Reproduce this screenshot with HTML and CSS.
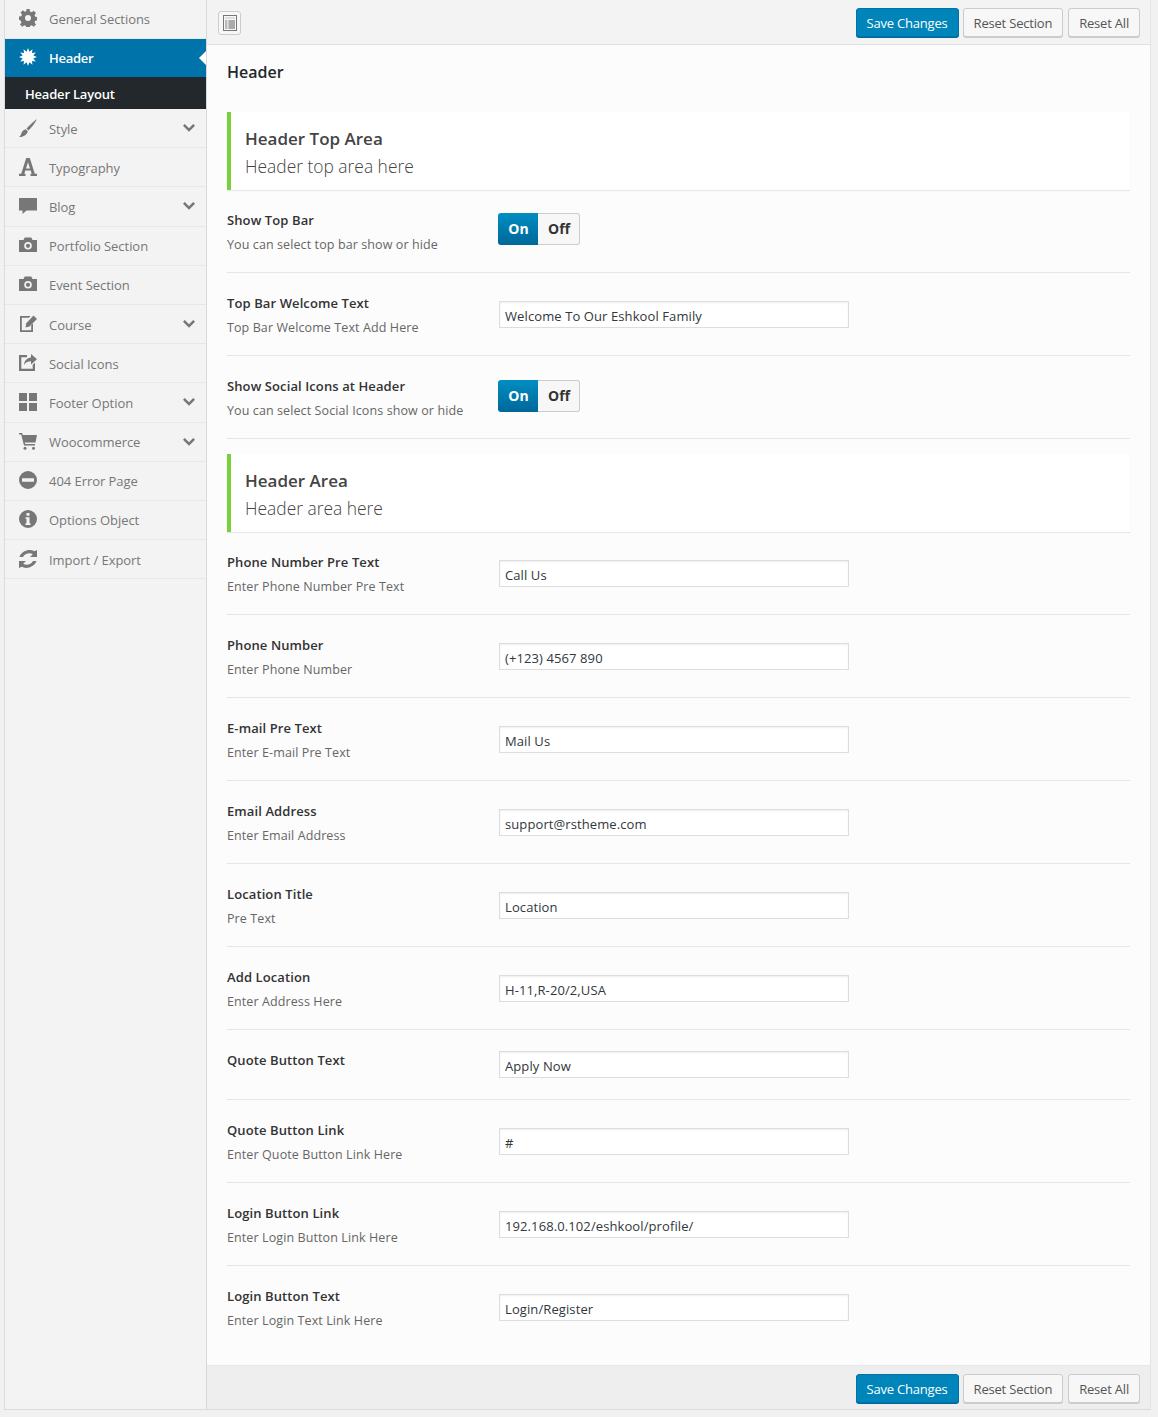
FILE: index.html
```html
<!DOCTYPE html>
<html lang="en">

<head>
  <meta charset="UTF-8" />
  <meta name="viewport" content="width=device-width, initial-scale=1.0" />
  <title>Theme Options</title>
  <link rel="stylesheet" href="styles.css">
</head>

<body>

  <svg class="sprite" width="0" height="0">
    <symbol id="i-gear" viewBox="0 0 18 18">
      <path d="M7.400 0h3.200l.4 2.500 1.700.7 2-1.500 2.300 2.300-1.500 2 .7 1.700 2.300.4v3.200l-2.300.4-.7 1.700 1.500 2-2.300 2.300-2-1.500-1.700.7-.4 2.300H7.400l-.4-2.300-1.700-.7-2 1.500-2.300-2.300 1.500-2-.7-1.700L0 10.800V7.600l2.300-.4.7-1.700-1.500-2 2.300-2.300 2 1.500 1.700-.7zM9 6a3 3 0 1 0 0 6 3 3 0 0 0 0-6z" fill-rule="evenodd" />
    </symbol>
    <symbol id="i-burst" viewBox="0 0 18 18">
      <polygon points="18,9 14.300,10.400 16.800,13.500 12.900,12.900 13.500,16.800 10.400,14.300 9,18 7.600,14.300 4.500,16.800 5.100,12.900 1.200,13.500 3.700,10.400 0,9 3.700,7.600 1.200,4.500 5.100,5.100 4.500,1.200 7.600,3.700 9,0 10.400,3.700 13.500,1.200 12.900,5.100 16.800,4.500 14.300,7.600" />
    </symbol>
    <symbol id="i-brush" viewBox="0 0 18 18">
      <path d="M18 0c-2 4-5 8-8.500 11.500l-2-2C10.500 6 14.500 2.500 18 0z" />
      <path d="M6.800 10.300l2 2C8.300 15.500 4 18.500 0 18c1.500-1 2-2.500 2.500-4 .6-1.800 2.500-3.500 4.300-3.700z" />
    </symbol>
    <symbol id="i-type" viewBox="0 0 18 18">
      <path d="M7.200 0h3.600l5 15.800H18V18h-6.500v-2.200h1.200l-1-3.200H6.300l-1 3.200h1.200V18H0v-2.200h2.200zM9 4.200l-2 6.200h4z" fill-rule="evenodd" />
    </symbol>
    <symbol id="i-chat" viewBox="0 0 18 18">
      <path d="M0 1h18v12.500H7.500L3.500 17v-3.500H0z" />
    </symbol>
    <symbol id="i-camera" viewBox="0 0 18 18">
      <path d="M0 4h4.500l1.200-2.500h6.600L13.500 4H18v12H0zM9 6a3.800 3.800 0 1 0 0 7.600A3.800 3.800 0 0 0 9 6zm0 1.700a2.100 2.100 0 1 1 0 4.200 2.100 2.100 0 0 1 0-4.200z" fill-rule="evenodd" />
    </symbol>
    <symbol id="i-edit" viewBox="0 0 18 18">
      <path d="M1 1h10.500L10 2.800H2.800v12.400h9.400v-5l1.800-2V17H1z" />
      <path d="M14.500.5L18 4l-7.500 7.500-4 1 .8-4.300z" />
    </symbol>
    <symbol id="i-share" viewBox="0 0 18 18">
      <path d="M0 1h8v2.200H2.300v11.600h11.400v-4l2.300-2V17H0z" />
      <path d="M12 0l6 5.200-6 5.300V7.300C8.500 7.300 6.500 8.500 5 11c.3-4.500 3-7.200 7-7.600z" />
    </symbol>
    <symbol id="i-grid" viewBox="0 0 18 18">
      <path d="M0 0h8v8H0zM10 0h8v8h-8zM0 10h8v8H0zM10 10h8v8h-8z" />
    </symbol>
    <symbol id="i-cart" viewBox="0 0 18 18">
      <path d="M0 1h3.200l.6 2H18l-1.500 7.500H5.800l.4 1.500H16v1.600H5L2.200 2.600H0z" />
      <circle cx="6" cy="16.200" r="1.500" />
      <circle cx="14.500" cy="16.200" r="1.500" />
    </symbol>
    <symbol id="i-minus" viewBox="0 0 18 18">
      <path d="M9 0a9 9 0 1 1 0 18A9 9 0 0 1 9 0zM3 7.300v3.400h12V7.300z" fill-rule="evenodd" />
    </symbol>
    <symbol id="i-info" viewBox="0 0 18 18">
      <path d="M9 0a9 9 0 1 1 0 18A9 9 0 0 1 9 0zM7.500 3v2.800h3V3zM6.500 7.200v1.600h1v4.400h-1V15h5v-1.800h-1V7.200z" fill-rule="evenodd" />
    </symbol>
    <symbol id="i-sync" viewBox="0 0 18 18">
      <path d="M15.300 1.200L18 0v7h-7l2.800-2.700C11 2.300 6 3 4 7H.5C2.500 1 10.500-1.500 15.300 1.200z" />
      <path d="M2.700 16.800L0 18v-7h7l-2.800 2.700C7 15.700 12 15 14 11h3.500c-2 6-10 8.500-14.800 5.800z" />
    </symbol>
    <symbol id="i-chevron" viewBox="0 0 12 8">
      <path d="M1.800 0L6 4.200 10.200 0 12 1.800 6 7.800 0 1.800z" />
    </symbol>
  </svg>

  <div class="panel">

    <nav class="menu">
      <a class="menu-item">
        <svg class="menu-icon"><use href="#i-gear" /></svg>General Sections
      </a>
      <a class="menu-item activo">
        <svg class="menu-icon"><use href="#i-burst" /></svg>Header
      </a>
      <a class="menu-sub">Header Layout</a>
      <a class="menu-item">
        <svg class="menu-icon"><use href="#i-brush" /></svg>Style
        <svg class="menu-seta"><use href="#i-chevron" /></svg>
      </a>
      <a class="menu-item">
        <svg class="menu-icon"><use href="#i-type" /></svg>Typography
      </a>
      <a class="menu-item">
        <svg class="menu-icon"><use href="#i-chat" /></svg>Blog
        <svg class="menu-seta"><use href="#i-chevron" /></svg>
      </a>
      <a class="menu-item">
        <svg class="menu-icon"><use href="#i-camera" /></svg>Portfolio Section
      </a>
      <a class="menu-item">
        <svg class="menu-icon"><use href="#i-camera" /></svg>Event Section
      </a>
      <a class="menu-item">
        <svg class="menu-icon"><use href="#i-edit" /></svg>Course
        <svg class="menu-seta"><use href="#i-chevron" /></svg>
      </a>
      <a class="menu-item">
        <svg class="menu-icon"><use href="#i-share" /></svg>Social Icons
      </a>
      <a class="menu-item">
        <svg class="menu-icon"><use href="#i-grid" /></svg>Footer Option
        <svg class="menu-seta"><use href="#i-chevron" /></svg>
      </a>
      <a class="menu-item">
        <svg class="menu-icon"><use href="#i-cart" /></svg>Woocommerce
        <svg class="menu-seta"><use href="#i-chevron" /></svg>
      </a>
      <a class="menu-item">
        <svg class="menu-icon"><use href="#i-minus" /></svg>404 Error Page
      </a>
      <a class="menu-item">
        <svg class="menu-icon"><use href="#i-info" /></svg>Options Object
      </a>
      <a class="menu-item">
        <svg class="menu-icon"><use href="#i-sync" /></svg>Import / Export
      </a>
    </nav>

    <main class="conteudo">

      <div class="barra barra-topo">
        <button class="expand-btn">
          <svg width="14" height="16" viewBox="0 0 14 16">
            <path d="M0 0h14v16H0zM1 1v14h12V1z" fill="#777" fill-rule="evenodd" />
            <path d="M2 2h10v2H2z" fill="#ddd" />
            <path d="M2 5h2.500v9H2z" fill="#bbb" />
            <path d="M5.500 5H12v9H5.500z" fill="#aaa" />
          </svg>
        </button>
        <div class="acoes">
          <button class="btn btn-salvar">Save Changes</button>
          <button class="btn">Reset Section</button>
          <button class="btn">Reset All</button>
        </div>
      </div>

      <div class="campos">
        <h2 class="pagina-titulo">Header</h2>

        <div class="secao">
          <h3>Header Top Area</h3>
          <p>Header top area here</p>
        </div>

        <div class="linha">
          <div class="rotulo"><strong>Show Top Bar</strong><span>You can select top bar show or hide</span></div>
          <div class="interruptor"><span class="ligado">On</span><span class="desligado">Off</span></div>
        </div>
        <div class="linha">
          <div class="rotulo"><strong>Top Bar Welcome Text</strong><span>Top Bar Welcome Text Add Here</span></div>
          <input class="entrada" type="text" value="Welcome To Our Eshkool Family" />
        </div>
        <div class="linha">
          <div class="rotulo"><strong>Show Social Icons at Header</strong><span>You can select Social Icons show or hide</span></div>
          <div class="interruptor"><span class="ligado">On</span><span class="desligado">Off</span></div>
        </div>

        <div class="secao">
          <h3>Header Area</h3>
          <p>Header area here</p>
        </div>

        <div class="linha">
          <div class="rotulo"><strong>Phone Number Pre Text</strong><span>Enter Phone Number Pre Text</span></div>
          <input class="entrada" type="text" value="Call Us" />
        </div>
        <div class="linha">
          <div class="rotulo"><strong>Phone Number</strong><span>Enter Phone Number</span></div>
          <input class="entrada" type="text" value="(+123) 4567 890" />
        </div>
        <div class="linha">
          <div class="rotulo"><strong>E-mail Pre Text</strong><span>Enter E-mail Pre Text</span></div>
          <input class="entrada" type="text" value="Mail Us" />
        </div>
        <div class="linha">
          <div class="rotulo"><strong>Email Address</strong><span>Enter Email Address</span></div>
          <input class="entrada" type="text" value="support@rstheme.com" />
        </div>
        <div class="linha">
          <div class="rotulo"><strong>Location Title</strong><span>Pre Text</span></div>
          <input class="entrada" type="text" value="Location" />
        </div>
        <div class="linha">
          <div class="rotulo"><strong>Add Location</strong><span>Enter Address Here</span></div>
          <input class="entrada" type="text" value="H-11,R-20/2,USA" />
        </div>
        <div class="linha curta">
          <div class="rotulo"><strong>Quote Button Text</strong></div>
          <input class="entrada" type="text" value="Apply Now" />
        </div>
        <div class="linha">
          <div class="rotulo"><strong>Quote Button Link</strong><span>Enter Quote Button Link Here</span></div>
          <input class="entrada" type="text" value="#" />
        </div>
        <div class="linha">
          <div class="rotulo"><strong>Login Button Link</strong><span>Enter Login Button Link Here</span></div>
          <input class="entrada" type="text" value="192.168.0.102/eshkool/profile/" />
        </div>
        <div class="linha ultima">
          <div class="rotulo"><strong>Login Button Text</strong><span>Enter Login Text Link Here</span></div>
          <input class="entrada" type="text" value="Login/Register" />
        </div>
      </div>

      <div class="barra barra-baixo">
        <div class="acoes">
          <button class="btn btn-salvar">Save Changes</button>
          <button class="btn">Reset Section</button>
          <button class="btn">Reset All</button>
        </div>
      </div>

    </main>
  </div>

</body>

</html>
```

FILE: styles.css
```css
body {
  font-family: "Open Sans", sans-serif;
  font-size: 13px;
  margin: 0;
  padding: 0;
  background: #f1f1f1;
  color: #32373c;
}

.sprite {
  display: block;
  height: 0;
}

.panel {
  display: flex;
  width: 1147px;
  height: 1410px;
  margin-left: 4px;
  border-left: 1px solid #dcdcdc;
  border-bottom: 1px solid #dcdcdc;
  box-sizing: border-box;
  background: #f3f3f3;
}

/* menu lateral */
.menu {
  width: 201px;
  flex-shrink: 0;
}

.menu-item {
  display: flex;
  align-items: center;
  position: relative;
  box-sizing: border-box;
  height: 39.2px;
  border-bottom: 1px solid #e7e7e7;
  padding: 1px 0 0 14px;
  color: #777;
  letter-spacing: -0.05px;
}

.menu-item:first-child {
  height: 39px;
  padding-top: 0;
}

.menu-icon {
  width: 18px;
  height: 18px;
  margin-right: 12px;
  margin-top: -2px;
  fill: #777;
}

.menu-seta {
  position: absolute;
  right: 11px;
  top: 15px;
  width: 12px;
  height: 8px;
  fill: #777;
}

.menu-item.activo {
  background: #0073aa;
  color: #fff;
  font-weight: 600;
  letter-spacing: -0.3px;
  border-bottom: none;
  height: 38px;
  padding-top: 0;
}

.menu-item.activo .menu-icon {
  fill: #fff;
}

.menu-item.activo::after {
  content: "";
  position: absolute;
  right: 0;
  top: 12px;
  border: 7px solid transparent;
  border-right-color: #fff;
  border-left: none;
}

.menu-sub {
  display: flex;
  align-items: center;
  box-sizing: border-box;
  height: 32px;
  padding: 1px 0 0 20px;
  background: #23282d;
  color: #fff;
  font-weight: 600;
  letter-spacing: -0.2px;
}

/* conteudo */
.conteudo {
  flex: 1;
  display: flex;
  flex-direction: column;
  border-left: 1px solid #d8d8d8;
  border-right: 1px solid #e4e4e4;
  background: #fcfcfc;
}

.barra {
  display: flex;
  align-items: center;
  justify-content: space-between;
  height: 45px;
  padding: 1px 10px 0 11px;
  background: #f3f3f3;
  box-sizing: border-box;
  flex-shrink: 0;
}

.barra-topo {
  border-bottom: 1px solid #e0e0e0;
}

.barra-baixo {
  height: 44px;
  padding-top: 2px;
  justify-content: flex-end;
  background: #eee;
  border-top: 1px solid #e8e8e8;
}

.expand-btn {
  display: flex;
  align-items: center;
  justify-content: center;
  width: 23px;
  height: 24px;
  padding: 0;
  background: #f7f7f7;
  border: 1px solid #ccc;
  border-radius: 3px;
}

.acoes {
  display: flex;
  gap: 4px;
}

.btn {
  height: 29px;
  padding: 0 10px;
  font-family: "Open Sans", sans-serif;
  font-size: 13px;
  letter-spacing: -0.2px;
  color: #555;
  background: #f7f7f7;
  border: 1px solid #ccc;
  border-radius: 3px;
  box-shadow: 0 1px 0 #ccc;
}

.btn:last-child {
  margin-left: 1px;
}

.btn-salvar {
  color: #fff;
  background: #0085ba;
  border-color: #0073aa;
  box-shadow: 0 1px 0 #006799;
}

.campos {
  flex: 1;
  padding: 0 20px;
}

.pagina-titulo {
  margin: 0;
  padding-top: 16px;
  height: 52px;
  box-sizing: border-box;
  font-size: 16px;
  line-height: 22px;
  font-weight: 600;
  color: #23282d;
}

.secao {
  height: 78px;
  box-sizing: border-box;
  margin-top: 15px;
  padding: 15px 14px;
  background: #fff;
  border-left: 4px solid #7ad03a;
  box-shadow: 0 1px 1px rgba(0, 0, 0, 0.08);
}

.secao h3 {
  margin: 0;
  font-size: 17px;
  line-height: 24px;
  font-weight: 600;
  color: #444;
}

.secao p {
  margin: 3px 0 0;
  font-size: 17.4px;
  line-height: 24px;
  font-weight: 300;
  color: #444;
}

.linha {
  display: flex;
  align-items: flex-start;
  padding: 20px 0 18px;
  border-bottom: 1px solid #e6e6e6;
}

.curta {
  padding-bottom: 21px;
}

.curta .entrada {
  margin-top: 1px;
}

.ultima {
  border-bottom: none;
}

.rotulo {
  width: 272px;
  flex-shrink: 0;
}

.rotulo strong {
  display: block;
  line-height: 20px;
  font-weight: 600;
  letter-spacing: 0.1px;
  color: #333;
}

.rotulo span {
  display: block;
  margin-top: 6px;
  line-height: 18px;
  font-size: 12.5px;
  letter-spacing: 0.1px;
  color: #666;
}

.entrada {
  width: 350px;
  height: 27px;
  margin-top: 8px;
  box-sizing: border-box;
  padding: 2px 5px 0;
  font-family: "Open Sans", sans-serif;
  font-size: 13px;
  letter-spacing: 0.1px;
  color: #32373c;
  background: #fff;
  border: 1px solid #ddd;
  box-shadow: inset 0 1px 2px rgba(0, 0, 0, 0.07);
}

.interruptor {
  display: flex;
  height: 32px;
  margin-left: -1px;
  margin-top: 4px;
  font-weight: 700;
  font-size: 14px;
  line-height: 32px;
  text-align: center;
}

.secao + .linha .interruptor {
  margin-top: 3px;
}

.ligado {
  width: 40px;
  padding-left: 1px;
  box-sizing: border-box;
  color: #fff;
  background: linear-gradient(to bottom, #008ec2, #006799);
  border-radius: 3px 0 0 3px;
}

.desligado {
  width: 42px;
  padding-left: 1px;
  color: #333;
  background: #f7f7f7;
  border: 1px solid #ccc;
  border-left: none;
  border-radius: 0 3px 3px 0;
  box-sizing: border-box;
  line-height: 30px;
}
```
